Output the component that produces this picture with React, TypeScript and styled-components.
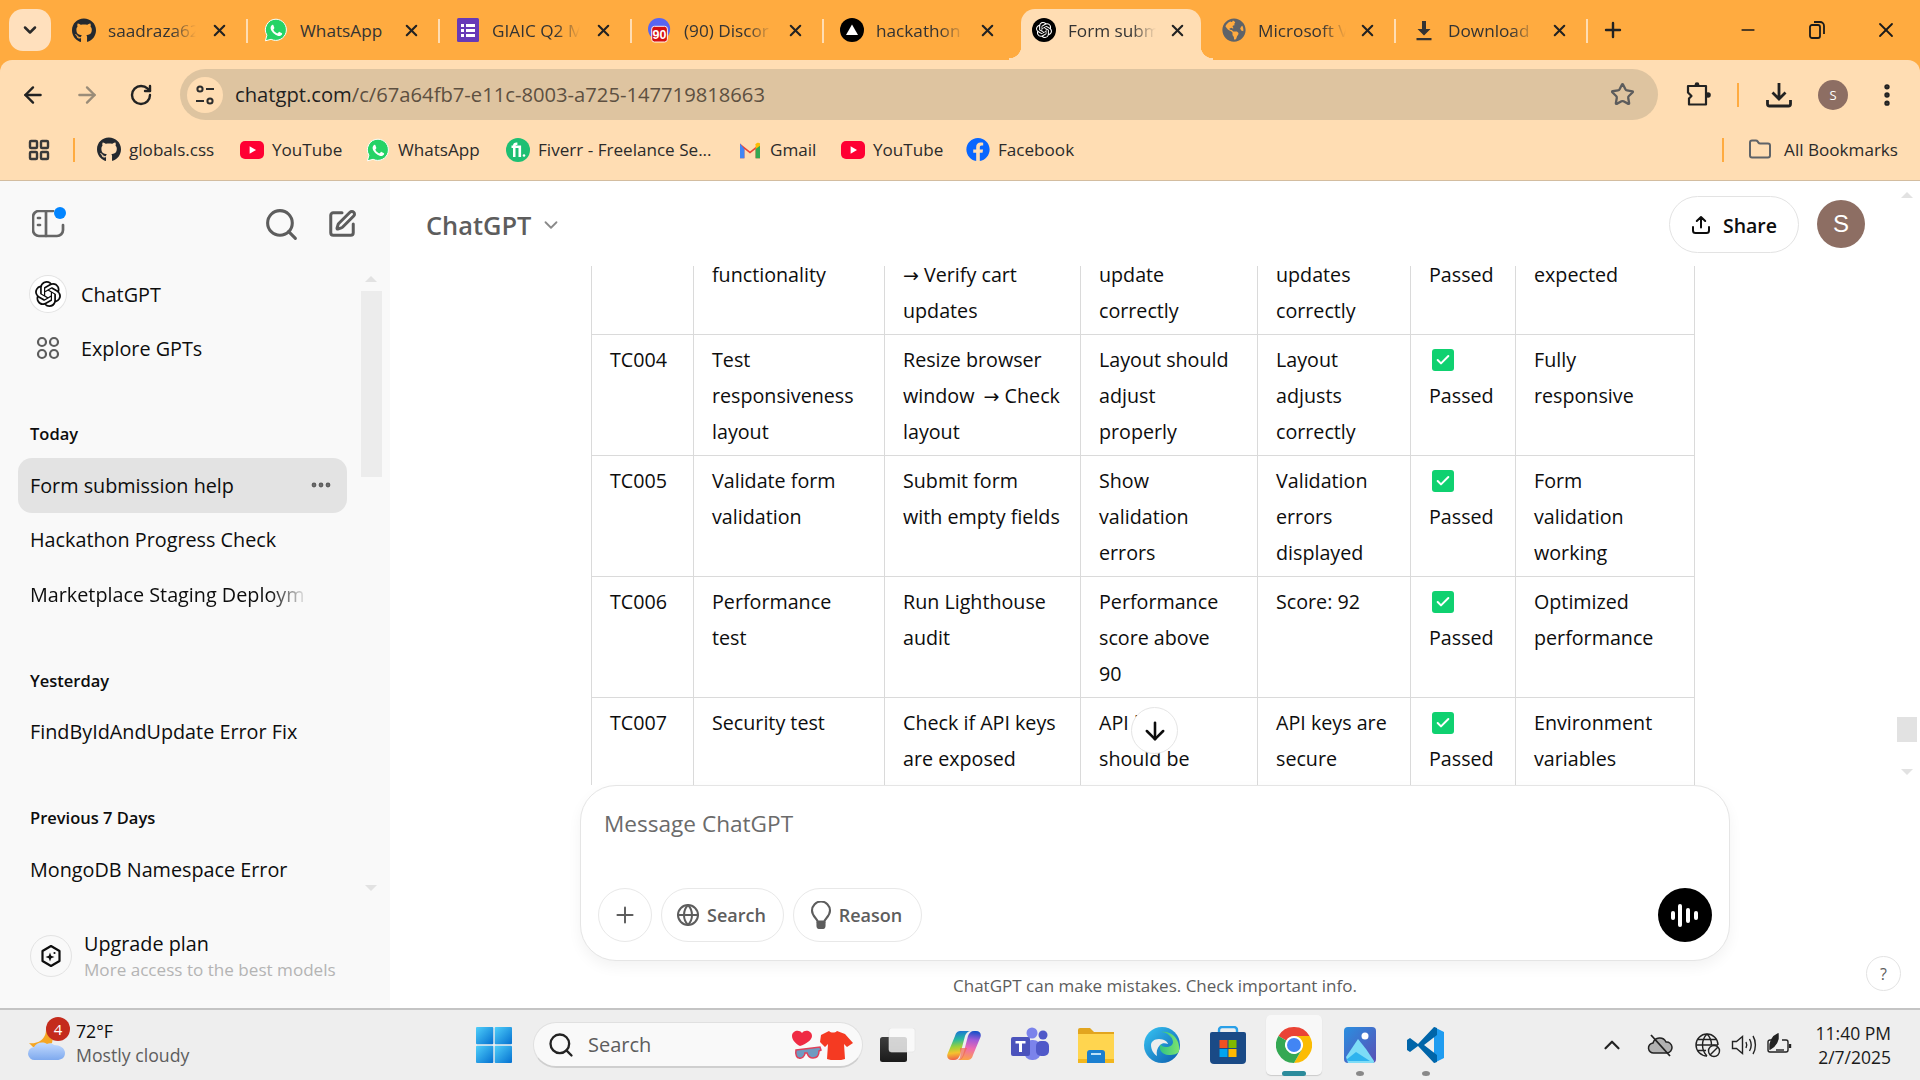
import React from 'react';
import styled, { createGlobalStyle } from 'styled-components';
import {
  ArrowLeft, ArrowRight, RotateCw, Star, EllipsisVertical, LayoutGrid, Folder, Plus, Minus, X, Search,
  SquarePen, ChevronDown, Globe, ArrowDown, Check, ChevronUp, Ellipsis,
} from 'lucide-react';
import { FaGithub, FaFacebook, FaGlobeAmericas } from 'react-icons/fa';
import { SiOpenai } from 'react-icons/si';

const FONT = `"Open Sans", "Noto Sans", sans-serif`;

const Global = createGlobalStyle`
  html, body { margin: 0; padding: 0; background: #fff; }
  * { box-sizing: border-box; }
  body { font-family: ${FONT}; overflow: hidden; color: #0d0d0d; }
`;

const Page = styled.div`
  width: 1920px; height: 1080px; display: flex; flex-direction: column; overflow: hidden;
`;

/* ---------- browser chrome ---------- */
const Chrome = styled.header`
  height: 181px; flex: none; background: #ffab40; display: flex; flex-direction: column;
`;
const TabStrip = styled.div`
  height: 60px; display: flex; padding-left: 9px;
`;
const TabMenu = styled.div`
  width: 42px; height: 42px; margin-top: 9px; margin-right: 5px; border-radius: 14px; background: #ffe0bd;
  display: flex; align-items: center; justify-content: center; color: #2a2a2a;
`;
const Tab = styled.div<{ $active?: boolean; $divider?: boolean; $w?: number }>`
  width: ${p => p.$w ?? 192}px; flex: none; height: 51px; margin-top: 9px; padding: 0 19px 9px 16px; display: flex; align-items: center;
  position: relative; border-radius: 14px 14px 0 0; color: #333;
  ${p => p.$divider && `&::after { content: ''; position: absolute; right: 0; top: 10px; height: 24px; width: 2px; background: #ffddb3; }`}
  ${p => p.$active && `
    margin-left: 5px; margin-right: 5px; padding: 0 14px 9px 11px; background: #ffddb3;
    &::before { content: ''; position: absolute; left: -12px; bottom: 0; width: 12px; height: 14px;
      background: radial-gradient(circle at 0 0, transparent 12px, #ffddb3 12.5px); }
    &::after { content: ''; position: absolute; right: -12px; bottom: 0; width: 12px; height: 14px;
      background: radial-gradient(circle at 100% 0, transparent 12px, #ffddb3 12.5px); }
  `}
`;
const TabIcon = styled.span`
  width: 24px; height: 24px; flex: none; display: flex; align-items: center; justify-content: center;
`;
const TabLabel = styled.span<{ $fade?: boolean }>`
  margin-left: 12px; width: 88px; flex: none; overflow: hidden; white-space: nowrap; font-size: 17.2px;
  ${p => p.$fade && `-webkit-mask-image: linear-gradient(90deg, #000 72%, transparent 100%); mask-image: linear-gradient(90deg, #000 72%, transparent 100%);`}
`;
const TabClose = styled.span`
  margin-left: auto; display: flex; color: #222;
`;
const NewTab = styled.div`
  margin: 9px 0 0 12px; height: 42px; width: 26px; display: flex; align-items: center; justify-content: center; color: #222;
`;
const WindowControls = styled.div`
  margin-left: auto; display: flex; height: 60px;
`;
const WindowButton = styled.div`
  width: 69px; height: 60px; display: flex; align-items: center; justify-content: center; color: #1a1a1a;
`;
const Toolbar = styled.div`
  height: 60px; background: #ffddb3; border-radius: 12px 12px 0 0; display: flex; align-items: center; padding: 9px 6px 0;
`;
const ToolButton = styled.div<{ $dim?: boolean }>`
  width: 54px; height: 46px; flex: none; display: flex; align-items: center; justify-content: center;
  color: ${p => (p.$dim ? '#9a8c78' : '#222')};
`;
const Omnibox = styled.div`
  flex: 1; height: 51px; margin: 0 14px 0 12px; background: #dec4a0; border-radius: 26px;
  display: flex; align-items: center; padding: 0 23px 0 7px;
`;
const SiteChip = styled.div`
  width: 36px; height: 36px; border-radius: 50%; background: #ffddb3; flex: none; display: flex; align-items: center; justify-content: center;
`;
const Url = styled.div`
  margin: -2px 0 0 12px; font-size: 20.2px; color: #5d5041; white-space: nowrap;
`;
const UrlHost = styled.span`
  color: #1f1f1f;
`;
const OmniStar = styled.div`
  margin-left: auto; display: flex; color: #5c5c5c;
`;
const ToolDivider = styled.div`
  width: 2px; height: 24px; background: #ffab40; margin: 0 13px 0 11px; flex: none;
`;
const ProfileChip = styled.div`
  width: 30px; height: 30px; border-radius: 50%; background: #8d6e63; color: #fff; font-size: 13px;
  display: flex; align-items: center; justify-content: center;
`;
const Bookmarks = styled.div`
  height: 61px; background: #ffddb3; border-bottom: 1px solid #d3bda0; display: flex; align-items: center; padding: 0 0 1px 27px;
`;
const AppsIcon = styled.div`
  width: 24px; height: 24px; display: flex; align-items: center; justify-content: center; color: #3a3a3a;
`;
const BarDivider = styled.div<{ $auto?: boolean }>`
  width: 2px; height: 24px; background: #ffab40; flex: none; margin-left: ${p => (p.$auto ? 'auto' : '22px')};
  margin-right: ${p => (p.$auto ? '24px' : '22px')};
`;
const Bookmark = styled.div<{ $w?: number }>`
  display: flex; align-items: center; flex: none; ${p => p.$w && `width: ${p.$w}px;`}
`;
const BookmarkIcon = styled.span`
  width: 24px; height: 24px; flex: none; display: flex; align-items: center; justify-content: center;
`;
const BookmarkLabel = styled.span`
  margin-left: 8px; font-size: 17.1px; color: #2b2b2b; white-space: nowrap;
`;
const AllBookmarks = styled(Bookmark)`
  margin-right: 22px; color: #5f6368;
`;
const AllBookmarksLabel = styled(BookmarkLabel)`
  margin-left: 12px;
`;

/* ---------- workspace ---------- */
const Workspace = styled.div`
  flex: 1; display: flex; min-height: 0;
`;
const Sidebar = styled.aside`
  width: 390px; flex: none; background: #f9f9f9; display: flex; flex-direction: column; position: relative;
`;
const SideTop = styled.div`
  height: 86px; flex: none; display: flex; align-items: center; padding: 0 33px 0 32px; color: #5d5d5d;
`;
const SideTopRight = styled.div`
  margin-left: auto; display: flex; gap: 27px; align-items: center;
`;
const ToggleWrap = styled.div`
  position: relative; width: 36px; height: 30px; display: flex; align-items: center;
`;
const BlueDot = styled.span`
  position: absolute; left: 22px; top: -2px; width: 12px; height: 12px; border-radius: 50%; background: #0285ff;
`;
const NavItem = styled.div`
  height: 54px; display: flex; align-items: center; padding-left: 30px; font-size: 19.8px; color: #0d0d0d;
`;
const NavIcon = styled.span<{ $ring?: boolean }>`
  width: 36px; height: 36px; flex: none; margin-right: 15px; border-radius: 50%; display: flex; align-items: center; justify-content: center;
  background: ${p => (p.$ring ? '#fff' : 'transparent')};
  box-shadow: ${p => (p.$ring ? '0 0 0 1px #e3e3e3' : 'none')};
`;
const GroupLabel = styled.div`
  height: 32px; line-height: 32px; margin: 43px 30px 8px; font-size: 16.5px; font-weight: 600; color: #0d0d0d;
`;
const ChatItem = styled.div<{ $active?: boolean }>`
  height: 54.5px; margin: 0 43px 0 18px; padding: 0 12px; border-radius: 14px; display: flex; align-items: center;
  background: ${p => (p.$active ? '#e3e3e3' : 'transparent')}; font-size: 19.8px; color: #0d0d0d; white-space: nowrap; overflow: hidden;
`;
const ChatTitle = styled.span<{ $fade?: boolean }>`
  flex: 1; overflow: hidden;
  ${p => p.$fade && `-webkit-mask-image: linear-gradient(90deg, #000 240px, transparent 278px); mask-image: linear-gradient(90deg, #000 240px, transparent 278px);`}
`;
const ChatDots = styled.span`
  display: flex; color: #5d5d5d; margin-right: 2px;
`;
const Upgrade = styled.div`
  margin-top: auto; height: 60px; margin-bottom: 22px; display: flex; align-items: center; padding-left: 30px;
`;
const UpgradeIcon = styled.span`
  width: 42px; height: 42px; border-radius: 50%; border: 1px solid #e3e3e3; flex: none; display: flex; align-items: center; justify-content: center;
`;
const UpgradeText = styled.div`
  margin-left: 12px; display: flex; flex-direction: column;
`;
const UpgradeTitle = styled.span`
  font-size: 19.8px; line-height: 26px; color: #0d0d0d;
`;
const UpgradeSub = styled.span`
  font-size: 17.1px; line-height: 25px; color: #b4b4b4; white-space: nowrap;
`;
const SideScrollThumb = styled.div`
  position: absolute; left: 361px; top: 110px; width: 21px; height: 186px; background: #ececec;
`;
const ArrowUpMark = styled.div<{ $left: number; $top: number }>`
  position: absolute; left: ${p => p.$left}px; top: ${p => p.$top}px; width: 0; height: 0;
  border-left: 6px solid transparent; border-right: 6px solid transparent; border-bottom: 6px solid #e2e2e2;
`;
const ArrowDownMark = styled(ArrowUpMark)`
  border-bottom: 0; border-top: 6px solid #e2e2e2;
`;

const Main = styled.main`
  flex: 1; min-width: 0; display: flex; flex-direction: column; position: relative; background: #fff;
`;
const MainHeader = styled.div`
  height: 85px; flex: none; display: flex; align-items: center; padding: 0 55px 0 36px;
`;
const ModelName = styled.div`
  display: flex; align-items: center; gap: 9px; font-size: 25.4px; font-weight: 600; color: #5d5d5d; padding-top: 3px;
`;
const ShareButton = styled.div`
  margin-left: auto; width: 130px; height: 57px; border: 1px solid #e3e3e3; border-radius: 29px; display: flex; align-items: center; justify-content: center;
  gap: 12px; font-size: 19.5px; font-weight: 600; color: #0d0d0d; margin-top: 2px; padding-top: 1px;
`;
const UserAvatar = styled.div`
  width: 48px; height: 48px; margin-left: 18px; border-radius: 50%; background: #8d6e63; color: #fff; font-size: 24px;
  display: flex; align-items: center; justify-content: center; font-family: "Liberation Sans", sans-serif;
`;
const ChatScroll = styled.div`
  flex: 1; min-height: 0; overflow: hidden; padding-left: 201px;
`;
const Table = styled.table`
  border-collapse: collapse; table-layout: fixed; width: 1103px; margin-top: -53px; font-size: 19.7px; color: #0d0d0d;
`;
const Td = styled.td`
  border: 1px solid #dadada; padding: 7px 10px 5px 18px; vertical-align: top; line-height: 36px; white-space: nowrap; height: 121px;
`;
const Line = styled.div``;
const ArrowGlyph = styled.span<{ $mid?: boolean }>`
  font-family: "DejaVu Sans", sans-serif; font-size: 19px; line-height: 0; margin-left: ${p => (p.$mid ? '4px' : '0')};
`;
const Tick = styled.span`
  width: 22px; height: 22px; margin: 7px 0 7px 3px; border-radius: 3px; background: #0fd170; color: #fff; display: flex; align-items: center; justify-content: center;
`;
const ScrollDown = styled.div`
  position: absolute; left: 741px; top: 526px; width: 47px; height: 47px; border-radius: 50%; background: #fff; border: 1px solid #e5e5e5;
  display: flex; align-items: center; justify-content: center; color: #0d0d0d;
`;
const PageThumb = styled.div`
  position: absolute; right: 3px; top: 536px; width: 20px; height: 25px; background: #e2e2e2;
`;
const ComposerZone = styled.div`
  flex: none; height: 223px; width: 1340px; padding: 0 0 0 190px; display: flex; flex-direction: column; background: transparent;
`;
const Composer = styled.div`
  width: 1150px; height: 176px; flex: none; border: 1px solid #e5e5e5; border-radius: 36px; background: #fff;
  box-shadow: 0 6px 14px rgba(0,0,0,.05); display: flex; flex-direction: column; padding: 0 17px 18px 17px;
`;
const Placeholder = styled.div`
  margin: 20px 0 0 6px; line-height: 36px; font-size: 22.6px; color: #6b6b6b;
`;
const ComposerTools = styled.div`
  margin-top: auto; display: flex; align-items: center; gap: 9px;
`;
const RoundTool = styled.div`
  width: 54px; height: 54px; border-radius: 50%; border: 1px solid #e8e8e8; display: flex; align-items: center; justify-content: center; color: #5d5d5d;
`;
const PillTool = styled.div<{ $w: number }>`
  width: ${p => p.$w}px; height: 54px; border-radius: 27px; border: 1px solid #e8e8e8; display: flex; align-items: center; justify-content: center; gap: 7px;
  font-size: 18px; font-weight: 600; color: #5d5d5d; padding-right: 3px;
`;
const VoiceButton = styled.div`
  margin-left: auto; width: 54px; height: 54px; border-radius: 50%; background: #000; display: flex; align-items: center; justify-content: center;
`;
const Disclaimer = styled.div`
  height: 47px; width: 1150px; display: flex; align-items: center; justify-content: center; font-size: 17px; color: #5d5d5d; padding-top: 2px;
`;
const HelpButton = styled.div`
  position: absolute; right: 19px; bottom: 17px; width: 35px; height: 35px; border-radius: 50%; border: 1px solid #e3e3e3; display: flex;
  align-items: center; justify-content: center; font-size: 16px; color: #5d5d5d;
`;

/* ---------- taskbar ---------- */
const Taskbar = styled.footer`
  height: 72px; flex: none; background: #eeeeee; border-top: 2px solid #c4c4c4; display: flex; align-items: center;
`;
const Weather = styled.div`
  width: 461px; flex: none; display: flex; align-items: center; padding-left: 27px;
`;
const WeatherIcon = styled.div`
  position: relative; width: 40px; height: 44px; flex: none; display: flex; align-items: flex-start;
`;
const WeatherBadge = styled.span`
  position: absolute; left: 19px; top: -6px; width: 24px; height: 24px; border-radius: 50%; background: #c42b1c; color: #fff; font-size: 15px;
  display: flex; align-items: center; justify-content: center;
`;
const WeatherText = styled.div`
  margin-left: 9px; display: flex; flex-direction: column; font-size: 17.7px; line-height: 24.5px; margin-top: -4px;
`;
const WeatherDesc = styled.span`
  color: #5d5d5d;
`;
const Slot = styled.div<{ $active?: boolean; $run?: boolean }>`
  width: 66px; height: 66px; flex: none; position: relative; display: flex; align-items: center; justify-content: center;
  ${p => p.$active && `&::before { content: ''; position: absolute; left: 5px; top: 3px; right: 5px; bottom: 3px; background: #f8f8f8; border-radius: 5px; box-shadow: 0 1px 1px rgba(0,0,0,.15); }`}
  ${p => p.$run && `&::after { content: ''; position: absolute; left: 29px; bottom: 2px; width: 8px; height: 5px; border-radius: 50%; background: #888; }`}
  ${p => p.$active && `&::after { content: ''; position: absolute; left: 21px; bottom: 2px; width: 24px; height: 5px; border-radius: 3px; background: #2c8b9b; }`}
  & > svg { position: relative; }
`;
const SearchPill = styled.div`
  width: 330px; height: 46px; flex: none; margin: 0 2px 0 6px; border-radius: 23px; background: #f9f9f9; border: 1px solid #e0e0e0; border-bottom: 2px solid #cfcfcf;
  display: flex; align-items: center; padding-left: 13px; font-size: 20px; color: #5d5d5d;
`;
const SearchText = styled.span`
  margin-left: 13px;
`;
const SearchArt = styled.span`
  margin-left: auto; margin-right: 9px; display: flex;
`;
const Tray = styled.div`
  margin-left: auto; display: flex; align-items: center; padding-right: 29px; color: #222;
`;
const TraySlot = styled.div<{ $w: number; $gap?: number }>`
  width: ${p => p.$w}px; margin-left: ${p => p.$gap ?? 0}px; display: flex; align-items: center; justify-content: center;
`;
const Clock = styled.div`
  width: 93px; text-align: right; font-size: 17.5px; line-height: 24px; color: #1a1a1a; white-space: nowrap;
`;

/* ---------- drawings ---------- */
const OpenAiBadge = () => (
  <svg width="24" height="24" viewBox="0 0 24 24">
    <circle cx="12" cy="12" r="12" fill="#000" />
    <g transform="translate(4 4) scale(.667)"><SiOpenai color="#fff" size={24} /></g>
  </svg>
);
const WhatsAppIcon = ({ s = 24 }: { s?: number }) => (
  <svg width={s} height={s} viewBox="0 0 24 24">
    <path d="M12 1.2a10.6 10.6 0 0 0-9.1 16L1.4 22.8l5.7-1.5A10.6 10.6 0 1 0 12 1.2z" fill="#25d366" stroke="#fff" strokeWidth="1" />
    <path d="M8.6 6.8c-.3 0-.8.2-1.1.6-.4.5-.9 1.2-.9 2.5s1 2.9 1.1 3.1c.2.2 2 3.1 4.9 4.2 2.4 1 2.9.8 3.4.7.5-.1 1.7-.7 1.9-1.3.2-.6.2-1.2.2-1.3-.1-.2-.3-.2-.6-.4l-2-1c-.3-.1-.5-.1-.7.2l-.9 1.1c-.2.2-.3.2-.6.1-.3-.2-1.2-.5-2.3-1.4-.8-.8-1.4-1.7-1.6-2-.1-.3 0-.5.2-.6l.7-1c.1-.2.1-.3 0-.5L9.4 7.3c-.2-.5-.5-.5-.8-.5z" fill="#fff" />
  </svg>
);
const YouTubeIcon = () => (
  <svg width="24" height="24" viewBox="0 0 24 24">
    <rect x="0" y="3" width="24" height="18" rx="5" fill="#ff0033" />
    <path d="M9.6 8.2l6.4 3.8-6.4 3.8z" fill="#fff" />
  </svg>
);
const FormsIcon = () => (
  <svg width="24" height="24" viewBox="0 0 24 24">
    <rect x="1" y="0" width="22" height="24" rx="1.5" fill="#673ab7" />
    <g fill="#fff"><rect x="5" y="6" width="3" height="3" /><rect x="10" y="6" width="9" height="3" /><rect x="5" y="11" width="3" height="3" /><rect x="10" y="11" width="9" height="3" /><rect x="5" y="16" width="3" height="3" /><rect x="10" y="16" width="9" height="3" /></g>
  </svg>
);
const NinetyIcon = () => (
  <svg width="26" height="26" viewBox="0 0 26 26">
    <circle cx="12" cy="12" r="12" fill="#5865f2" />
    <rect x="4" y="9" width="17" height="17" rx="3" fill="#d50f0f" stroke="#fff" strokeWidth="1" />
    <text x="12.5" y="23" textAnchor="middle" fontSize="13.5" fontWeight="700" fill="#fff" fontFamily="Liberation Sans, sans-serif">90</text>
  </svg>
);
const VercelIcon = () => (
  <svg width="24" height="24" viewBox="0 0 24 24">
    <circle cx="12" cy="12" r="12" fill="#000" />
    <path d="M12 6.5l6 10.5H6z" fill="#fff" />
  </svg>
);
const DownloadMark = ({ s = 24, c = '#333' }: { s?: number; c?: string }) => (
  <svg width={s} height={s} viewBox="0 0 24 24" fill={c}>
    <path d="M10 3h4v8h4.5L12 17.5 5.5 11H10zM4.5 20h15v2.2h-15z" />
  </svg>
);
const DownloadTray = () => (
  <svg width="26" height="26" viewBox="0 0 26 26" fill="none" stroke="#222" strokeWidth="2.8">
    <path d="M13 1v15M6.500 10.500L13 17l6.500-6.500" />
    <path d="M1.500 18v4a2 2 0 0 0 2 2h19a2 2 0 0 0 2-2v-4" />
  </svg>
);
const ExtensionIcon = () => (
  <svg width="26" height="26" viewBox="0 0 26 26" fill="none" stroke="#222" strokeWidth="2.2" strokeLinejoin="round">
    <path d="M2 4h18v18.500H3v-6l2.500-2.500L2 10.500z" />
    <circle cx="11" cy="2.500" r="2.300" fill="#222" stroke="none" />
    <circle cx="22" cy="13" r="2.800" fill="#222" stroke="none" />
  </svg>
);
const SiteIcon = () => (
  <svg width="22" height="24" viewBox="0 0 22 24" fill="none" stroke="#2d2d2d" strokeWidth="2">
    <circle cx="6" cy="6" r="2.6" /><path d="M12 6h8" />
    <circle cx="16" cy="18" r="2.6" /><path d="M2 18h8" />
  </svg>
);
const GoogleM = () => (
  <svg width="24" height="24" viewBox="0 0 24 24">
    <path d="M2 5.500l10 8 10-8v14.800h-4.400V11L12 15.400 6.400 11v9.300H2z" fill="#ea4335" />
    <path d="M2 5.500V20.300h4.400V11z" fill="#4285f4" />
    <path d="M17.600 11v9.300H22V5.500z" fill="#34a853" />
    <path d="M22 5.500v2.200l-4.400 3.300V6.200c1-1.800 3.300-2 4.400-.7z" fill="#fbbc04" />
  </svg>
);
const FiverrIcon = () => (
  <svg width="24" height="24" viewBox="0 0 24 24">
    <circle cx="12" cy="12" r="12" fill="#1dbf73" />
    <path d="M7 19V10H5.500V7.500H7C7 5.500 8.400 4.500 10.400 4.500h1V7h-.8c-.8 0-1.100.2-1.100.9v-.4h5.600V19h-2.600v-9H9.500v9z" fill="#fff" />
    <circle cx="18" cy="17.500" r="1.300" fill="#fff" />
  </svg>
);
const ToggleIcon = () => (
  <svg width="33" height="28" viewBox="0 0 33 28" fill="none" stroke="#666" strokeWidth="2.700" strokeLinecap="round">
    <path d="M31 15v5a6 6 0 0 1-6 6H7a6 6 0 0 1-6-6V7a6 6 0 0 1 6-6h14" />
    <path d="M14 1v25" />
    <path d="M6 8h2M6 15h2" />
  </svg>
);
const ExploreIcon = () => (
  <svg width="24" height="24" viewBox="0 0 24 24" fill="none" stroke="#5d5d5d" strokeWidth="2.2">
    <circle cx="6" cy="6" r="4" /><circle cx="18" cy="6" r="4" /><circle cx="6" cy="18" r="4" /><circle cx="18" cy="18" r="4" />
  </svg>
);
const UpgradeGlyph = () => (
  <svg width="22" height="24" viewBox="0 0 22 24">
    <path d="M11 2l8.500 5v10L11 22l-8.500-5V7z" fill="none" stroke="#0d0d0d" strokeWidth="2.200" strokeLinejoin="round" />
    <path d="M10 8.500l1.200 3.300 3.300 1.200-3.300 1.200L10 17.500l-1.200-3.300L5.500 13l3.300-1.200z" fill="#0d0d0d" />
    <circle cx="14.500" cy="9" r="1.100" fill="#0d0d0d" />
  </svg>
);
const ShareIcon = () => (
  <svg width="20" height="20" viewBox="0 0 20 20" fill="none" stroke="#0d0d0d" strokeWidth="2" strokeLinecap="round" strokeLinejoin="round">
    <path d="M10 12.500V2M5.800 6L10 2l4.200 4M2 12v3.500A2.500 2.500 0 0 0 4.500 18h11a2.500 2.500 0 0 0 2.500-2.500V12" />
  </svg>
);
const BulbIcon = () => (
  <svg width="22" height="28" viewBox="0 0 22 28" fill="none" stroke="#5d5d5d" strokeWidth="2.100">
    <path d="M7.500 20.500c0-3-5.500-5-5.500-11a9 9 0 0 1 18 0c0 6-5.500 8-5.500 11z" />
    <path d="M7.500 21v3.500c0 1.500 1 2.500 2 2.500h3c1 0 2-1 2-2.500V21" fill="#5d5d5d" />
  </svg>
);
const VoiceBars = () => (
  <svg width="30" height="24" viewBox="0 0 30 24" fill="#fff">
    <rect x="1" y="8" width="4" height="9" rx="2" /><rect x="8" y="1" width="4" height="23" rx="2" />
    <rect x="16" y="5" width="4" height="15" rx="2" /><rect x="24" y="8" width="4" height="9" rx="2" />
  </svg>
);
const WeatherArt = () => (
  <svg width="38" height="40" viewBox="0 0 38 40">
    <defs><linearGradient id="wc" x1="0" y1="0" x2="0" y2="1"><stop offset="0" stopColor="#c4dcff" /><stop offset="1" stopColor="#7ea9ee" /></linearGradient></defs>
    <path d="M2 20c6 1 12-1 15-6 2-3 2-6 2-9 5 3 8 9 6 15l-6 4H6z" fill="#f5a623" />
    <path d="M8 37a6.500 6.500 0 0 1-1-13c2-4 8-6 13-3 2-1 5-1 7 1 6 0 11 3 11 8s-4 7-8 7z" fill="url(#wc)" />
  </svg>
);
const WinLogo = () => (
  <svg width="36" height="36" viewBox="0 0 36 36">
    <defs><linearGradient id="win" x1="0" y1="0" x2="1" y2="1"><stop offset="0" stopColor="#4fcffa" /><stop offset="1" stopColor="#0470d0" /></linearGradient></defs>
    <g fill="url(#win)"><rect x="0" y="0" width="17.300" height="17.300" rx="1" /><rect x="18.700" y="0" width="17.300" height="17.300" rx="1" /><rect x="0" y="18.700" width="17.300" height="17.300" rx="1" /><rect x="18.700" y="18.700" width="17.300" height="17.300" rx="1" /></g>
  </svg>
);
const TaskView = () => (
  <svg width="36" height="34" viewBox="0 0 36 34">
    <defs><linearGradient id="tv" x1="0" y1="0" x2="0" y2="1"><stop offset="0" stopColor="#3e3e3e" /><stop offset="1" stopColor="#1a1a1a" /></linearGradient></defs>
    <rect x="0" y="9" width="27" height="25" rx="2.500" fill="url(#tv)" />
    <rect x="9" y="0" width="26" height="24" rx="2.500" fill="#fbfbfb" fillOpacity=".8" stroke="#e2e2e2" strokeWidth=".6" />
  </svg>
);
const Copilot = () => (
  <svg width="34" height="31" viewBox="0 0 34 31">
    <defs>
      <linearGradient id="c1" x1=".3" y1="0" x2=".4" y2="1"><stop offset="0" stopColor="#1a6fd8" /><stop offset=".3" stopColor="#28b8a0" /><stop offset=".55" stopColor="#9ed13a" /><stop offset=".75" stopColor="#f5c22e" /><stop offset="1" stopColor="#ef5a4a" /></linearGradient>
      <linearGradient id="c2" x1=".6" y1="0" x2=".5" y2="1"><stop offset="0" stopColor="#1450c8" /><stop offset=".3" stopColor="#a35ad8" /><stop offset=".6" stopColor="#ee6ab0" /><stop offset="1" stopColor="#fba24a" /></linearGradient>
    </defs>
    <path d="M8 6C9 2 11 1 14 1h10c-3 0-5 2-6 5l-5 19c-1 3-3 5-6 5H5c-4 0-5.500-3-4.500-6z" fill="url(#c1)" />
    <path d="M26 25c-1 4-3 5-6 5H10c3 0 5-2 6-5l5-19c1-3 3-5 6-5h2c4 0 5.500 3 4.500 6z" fill="url(#c2)" />
    <path d="M13 18h7l-3 7c-1 3-3 5-6 5h-1c3 0 4-3 3-12z" fill="#ef6a50" fillOpacity=".7" />
  </svg>
);
const Teams = () => (
  <svg width="38" height="36" viewBox="0 0 38 36">
    <circle cx="21" cy="6" r="5.500" fill="#7b83eb" /><circle cx="32" cy="8" r="4.500" fill="#5059c9" />
    <rect x="13" y="13" width="17" height="20" rx="8" fill="#7b83eb" />
    <rect x="25" y="14" width="13" height="15" rx="5" fill="#5059c9" />
    <rect x="0" y="10" width="19" height="19" rx="2" fill="#4b53bc" />
    <path d="M4.500 14h10v2.500H11V25H8v-8.500H4.500z" fill="#fff" />
  </svg>
);
const Explorer = () => (
  <svg width="36" height="36" viewBox="0 0 36 36">
    <path d="M0 3a2 2 0 0 1 2-2h10l4 4h20v8H0z" fill="#e2a51f" />
    <path d="M0 7h36v27a2 2 0 0 1-2 2H2a2 2 0 0 1-2-2z" fill="#ffd54f" />
    <rect x="0" y="32" width="36" height="4" fill="#f2b71e" />
    <path d="M9 26a3 3 0 0 1 3-3h12a3 3 0 0 1 3 3v10H9z" fill="#1b7fd0" />
    <rect x="13" y="26" width="10" height="2" fill="#bde0f7" />
  </svg>
);
const Edge = () => (
  <svg width="36" height="38" viewBox="0 0 36 38">
    <defs>
      <linearGradient id="e1" x1="0" y1="0" x2="1" y2="1"><stop offset="0" stopColor="#37c6f4" /><stop offset="1" stopColor="#0b5cad" /></linearGradient>
      <linearGradient id="e2" x1="0" y1="0" x2="1" y2="0"><stop offset="0" stopColor="#33c481" /><stop offset="1" stopColor="#7be36f" /></linearGradient>
    </defs>
    <circle cx="18" cy="19" r="18" fill="url(#e1)" />
    <path d="M35 25c.8-6-1-11-5-15-3-3-8-5-13-4 6 0 12 5 12 10 0 3-3 5-7 5-3 0-5-1-5-3-3 4 0 11 8 11 5 0 9-1 10-4z" fill="url(#e2)" />
    <path d="M16 19c-3 3-4 7-3 11-3-2-6-6-6-11 0-3 3-6 8-6 5 0 9 3 9 5-3-1-6-1-8 1z" fill="#eeeeee" />
  </svg>
);
const Store = () => (
  <svg width="36" height="38" viewBox="0 0 36 38">
    <path d="M9 7V4a3 3 0 0 1 3-3h12a3 3 0 0 1 3 3v3" fill="none" stroke="#2aa0e8" strokeWidth="2.400" />
    <path d="M0 8a2 2 0 0 1 2-2h32a2 2 0 0 1 2 2v26a4 4 0 0 1-4 4H4a4 4 0 0 1-4-4z" fill="#1a4a86" />
    <rect x="9.500" y="14" width="8" height="8" fill="#f25022" /><rect x="18.500" y="14" width="8" height="8" fill="#7fba00" />
    <rect x="9.500" y="23" width="8" height="8" fill="#00a4ef" /><rect x="18.500" y="23" width="8" height="8" fill="#ffb900" />
  </svg>
);
const ChromeLogo = () => (
  <svg width="36" height="36" viewBox="0 0 36 36">
    <circle cx="18" cy="18" r="18" fill="#fff" />
    <path d="M2.410 9A18 18 0 0 1 33.590 9H18A9 9 0 0 0 10.200 13.500z" fill="#ea4335" />
    <path d="M33.590 9A18 18 0 0 1 18 36L25.800 22.500A9 9 0 0 0 18 9z" fill="#fbbc04" />
    <path d="M18 36A18 18 0 0 1 2.410 9L10.200 13.500A9 9 0 0 0 25.800 22.500z" fill="#34a853" />
    <circle cx="18" cy="18" r="7" fill="#4285f4" />
  </svg>
);
const Photos = () => (
  <svg width="34" height="36" viewBox="0 0 34 36">
    <defs><linearGradient id="ph" x1="0" y1="0" x2="1" y2="1"><stop offset="0" stopColor="#2a8fe0" /><stop offset="1" stopColor="#5a4fb5" /></linearGradient></defs>
    <rect x="1" y="0" width="32" height="36" rx="4" fill="url(#ph)" />
    <circle cx="22" cy="9" r="3.500" fill="#fff" />
    <path d="M3 30l12-18 8 10 8 12v1a1 1 0 0 1-1 1H5z" fill="#7ddcf7" />
    <path d="M3 33l10-8 14 9H6z" fill="#2fb3ee" />
  </svg>
);
const VsCode = () => (
  <svg width="38" height="38" viewBox="0 0 38 38">
    <path d="M27 1l10 5v26l-10 5z" fill="#1f9cf0" />
    <path d="M27 1L11 18 3 12 0 14v10l3 2 8-6 16 17 3-1V29L17 19 30 9V2z" fill="#0065a9" />
  </svg>
);
const CloudOffIcon = () => (
  <svg width="26" height="24" viewBox="0 0 26 24" fill="none" stroke="#222" strokeWidth="1.500">
    <path d="M7 20a5 5 0 0 1-1-10 7 7 0 0 1 13-1 5.500 5.500 0 0 1 1 11z" fill="#8a8a8a" fillOpacity=".6" />
    <path d="M4 2l19 21" stroke="#222" strokeWidth="1.800" />
  </svg>
);
const GlobeBan = () => (
  <svg width="26" height="26" viewBox="0 0 26 26" fill="none" stroke="#222" strokeWidth="1.400">
    <path d="M12 24a11 11 0 1 1 11-11" /><path d="M1 13h22M3 7.500h18M3 18.500h8M12 2c-3 3-4.500 7-4.500 11s1.500 8 4.500 11M12 2c3 3 4.500 7 4.500 11" />
    <circle cx="19" cy="19" r="5.500" fill="#eee" /><path d="M15 23l8-8" />
  </svg>
);
const Speaker = () => (
  <svg width="26" height="24" viewBox="0 0 26 24" fill="none" stroke="#222" strokeWidth="1.400">
    <path d="M1.500 8.500h4l6-5v17l-6-5h-4z" />
    <path d="M15 9c1 2 1 4 0 6M18.500 6c2 3.500 2 8.500 0 12M22 3c3.200 5 3.200 13 0 18" />
  </svg>
);
const BatteryLeaf = () => (
  <svg width="26" height="24" viewBox="0 0 26 24" fill="none" stroke="#222" strokeWidth="1.400">
    <path d="M8 7H3a2 2 0 0 0-2 2v8a2 2 0 0 0 2 2h16a2 2 0 0 0 2-2V9a2 2 0 0 0-2-2h-4" />
    <path d="M23 11v4" strokeWidth="2.400" />
    <path d="M3 16C2 9 6 3 11 1c1 6-2 12-8 15z" fill="#222" />
    <path d="M9 17h8" />
  </svg>
);
const SearchDecor = () => (
  <svg width="62" height="30" viewBox="0 0 62 30">
    <path d="M1 6c0-5 7-7 10-3 3-4 10-2 10 3 0 4-6 8-12 10C5 14 1 10 1 6z" fill="#ef2b44" />
    <path d="M5 20l24-3 1 3-2 1c0 5-2 7-6 7-3 0-5-2-6-5h-2c0 3-3 6-6 5-2 0-4-3-3-8z" fill="#6f9ac0" stroke="#e0405a" strokeWidth="1.500" />
    <path d="M30 5l8-4c2 2 6 2 8 0l8 3 8 9-6 4-3-3 1 15c-6 2-12 2-18 0l1-15-3 3-5-5z" fill="#f53a22" />
  </svg>
);

const ColumnWidths = [102, 191, 196, 177, 153, 105, 179];

const rows: (string[] | null)[][] = [
  [['TC003'], ['Test cart', 'functionality'], ['Add item to cart', '→ Verify cart', 'updates'], ['Cart should', 'update', 'correctly'], ['Cart', 'updates', 'correctly'], null, ['Works as', 'expected']],
  [['TC004'], ['Test', 'responsiveness', 'layout'], ['Resize browser', 'window → Check', 'layout'], ['Layout should', 'adjust', 'properly'], ['Layout', 'adjusts', 'correctly'], null, ['Fully', 'responsive']],
  [['TC005'], ['Validate form', 'validation'], ['Submit form', 'with empty fields'], ['Show', 'validation', 'errors'], ['Validation', 'errors', 'displayed'], null, ['Form', 'validation', 'working']],
  [['TC006'], ['Performance', 'test'], ['Run Lighthouse', 'audit'], ['Performance', 'score above', '90'], ['Score: 92'], null, ['Optimized', 'performance']],
  [['TC007'], ['Security test'], ['Check if API keys', 'are exposed'], ['API keys', 'should be'], ['API keys are', 'secure'], null, ['Environment', 'variables']],
];

const renderLine = (l: string) => {
  const parts = l.split('→');
  if (parts.length === 1) return l;
  return <>{parts[0]}<ArrowGlyph $mid={parts[0] !== ''}>→</ArrowGlyph>{parts[1]}</>;
};

const tabs = [
  { icon: <FaGithub size={25} color="#24292f" />, label: 'saadraza62', fade: true, divider: true },
  { icon: <WhatsAppIcon />, label: 'WhatsApp', divider: true },
  { icon: <FormsIcon />, label: 'GIAIC Q2 M', fade: true, divider: true },
  { icon: <NinetyIcon />, label: '(90) Discor', fade: true, divider: true },
  { icon: <VercelIcon />, label: 'hackathon', fade: true },
  { icon: <OpenAiBadge />, label: 'Form subm', fade: true, active: true, w: 180 },
  { icon: <FaGlobeAmericas size={24} color="#5f6368" />, label: 'Microsoft V', fade: true, divider: true, w: 190 },
  { icon: <DownloadMark />, label: 'Download', fade: true, divider: true },
];

const bookmarks = [
  { icon: <FaGithub size={25} color="#24292f" />, label: 'globals.css', w: 143 },
  { icon: <YouTubeIcon />, label: 'YouTube', w: 126 },
  { icon: <WhatsAppIcon />, label: 'WhatsApp', w: 140 },
  { icon: <FiverrIcon />, label: 'Fiverr - Freelance Se...', w: 232 },
  { icon: <GoogleM />, label: 'Gmail', w: 103 },
  { icon: <YouTubeIcon />, label: 'YouTube', w: 125 },
  { icon: <FaFacebook size={25} color="#0866ff" />, label: 'Facebook' },
];

export default function App() {
  return (
    <Page>
      <Global />
      <Chrome>
        <TabStrip>
          <TabMenu><ChevronDown size={20} strokeWidth={3} /></TabMenu>
          {tabs.map(t => (
            <Tab key={t.label} $active={t.active} $divider={t.divider} $w={t.w}>
              <TabIcon>{t.icon}</TabIcon>
              <TabLabel $fade={t.fade}>{t.label}</TabLabel>
              <TabClose><X size={19} strokeWidth={2.6} /></TabClose>
            </Tab>
          ))}
          <NewTab><Plus size={24} strokeWidth={2.4} /></NewTab>
          <WindowControls>
            <WindowButton><Minus size={20} strokeWidth={2} /></WindowButton>
            <WindowButton>
              <svg width="18" height="20" viewBox="0 0 18 20" fill="none" stroke="#1a1a1a" strokeWidth="1.800"><rect x="2" y="5" width="10" height="13" rx="2" /><path d="M6 2h6a4 4 0 0 1 4 4v8" /></svg>
            </WindowButton>
            <WindowButton><X size={24} strokeWidth={1.8} /></WindowButton>
          </WindowControls>
        </TabStrip>
        <Toolbar>
          <ToolButton><ArrowLeft size={26} strokeWidth={2.2} /></ToolButton>
          <ToolButton $dim><ArrowRight size={26} strokeWidth={2.2} /></ToolButton>
          <ToolButton><RotateCw size={24} strokeWidth={2.4} /></ToolButton>
          <Omnibox>
            <SiteChip><SiteIcon /></SiteChip>
            <Url><UrlHost>chatgpt.com</UrlHost>/c/67a64fb7-e11c-8003-a725-147719818663</Url>
            <OmniStar><Star size={25} strokeWidth={2.2} /></OmniStar>
          </Omnibox>
          <ToolButton><ExtensionIcon /></ToolButton>
          <ToolDivider />
          <ToolButton><DownloadTray /></ToolButton>
          <ToolButton><ProfileChip>S</ProfileChip></ToolButton>
          <ToolButton><EllipsisVertical size={28} strokeWidth={2.6} /></ToolButton>
        </Toolbar>
        <Bookmarks>
          <AppsIcon><LayoutGrid size={26} strokeWidth={2.4} /></AppsIcon>
          <BarDivider />
          {bookmarks.map((b, i) => (
            <Bookmark key={i} $w={b.w}>
              <BookmarkIcon>{b.icon}</BookmarkIcon>
              <BookmarkLabel>{b.label}</BookmarkLabel>
            </Bookmark>
          ))}
          <BarDivider $auto />
          <AllBookmarks>
            <BookmarkIcon><Folder size={25} strokeWidth={2} /></BookmarkIcon>
            <AllBookmarksLabel>All Bookmarks</AllBookmarksLabel>
          </AllBookmarks>
        </Bookmarks>
      </Chrome>

      <Workspace>
        <Sidebar>
          <SideTop>
            <ToggleWrap><ToggleIcon /><BlueDot /></ToggleWrap>
            <SideTopRight>
              <Search size={37} strokeWidth={2} />
              <SquarePen size={30} strokeWidth={2.4} />
            </SideTopRight>
          </SideTop>
          <NavItem><NavIcon $ring><SiOpenai size={26} color="#0d0d0d" /></NavIcon>ChatGPT</NavItem>
          <NavItem><NavIcon><ExploreIcon /></NavIcon>Explore GPTs</NavItem>
          <GroupLabel>Today</GroupLabel>
          <ChatItem $active><ChatTitle>Form submission help</ChatTitle><ChatDots><Ellipsis size={24} strokeWidth={2.8} /></ChatDots></ChatItem>
          <ChatItem><ChatTitle>Hackathon Progress Check</ChatTitle></ChatItem>
          <ChatItem><ChatTitle $fade>Marketplace Staging Deploym</ChatTitle></ChatItem>
          <GroupLabel>Yesterday</GroupLabel>
          <ChatItem><ChatTitle>FindByIdAndUpdate Error Fix</ChatTitle></ChatItem>
          <GroupLabel>Previous 7 Days</GroupLabel>
          <ChatItem><ChatTitle>MongoDB Namespace Error</ChatTitle></ChatItem>
          <Upgrade>
            <UpgradeIcon><UpgradeGlyph /></UpgradeIcon>
            <UpgradeText>
              <UpgradeTitle>Upgrade plan</UpgradeTitle>
              <UpgradeSub>More access to the best models</UpgradeSub>
            </UpgradeText>
          </Upgrade>
          <ArrowUpMark $left={365} $top={95} />
          <SideScrollThumb />
          <ArrowDownMark $left={365} $top={704} />
        </Sidebar>

        <Main>
          <MainHeader>
            <ModelName>ChatGPT<ChevronDown size={22} strokeWidth={2} color="#8a8a8a" /></ModelName>
            <ShareButton><ShareIcon />Share</ShareButton>
            <UserAvatar>S</UserAvatar>
          </MainHeader>
          <ChatScroll>
            <Table>
              <colgroup>{ColumnWidths.map((w, i) => <col key={i} style={{ width: w }} />)}</colgroup>
              <tbody>
                {rows.map((r, i) => (
                  <tr key={i}>
                    {r.map((cell, j) => (
                      <Td key={j}>
                        {cell
                          ? cell.map(l => <Line key={l}>{renderLine(l)}</Line>)
                          : <><Tick><Check size={16} strokeWidth={3} /></Tick><Line>Passed</Line></>}
                      </Td>
                    ))}
                  </tr>
                ))}
              </tbody>
            </Table>
          </ChatScroll>
          <ComposerZone>
            <Composer>
              <Placeholder>Message ChatGPT</Placeholder>
              <ComposerTools>
                <RoundTool><Plus size={26} strokeWidth={1.8} /></RoundTool>
                <PillTool $w={123}><Globe size={24} strokeWidth={2} />Search</PillTool>
                <PillTool $w={129}><BulbIcon />Reason</PillTool>
                <VoiceButton><VoiceBars /></VoiceButton>
              </ComposerTools>
            </Composer>
            <Disclaimer>ChatGPT can make mistakes. Check important info.</Disclaimer>
          </ComposerZone>
          <ScrollDown><ArrowDown size={28} strokeWidth={2.2} /></ScrollDown>
          <ArrowUpMark $left={1511} $top={11} />
          <PageThumb />
          <ArrowDownMark $left={1511} $top={588} />
          <HelpButton>?</HelpButton>
        </Main>
      </Workspace>

      <Taskbar>
        <Weather>
          <WeatherIcon><WeatherArt /><WeatherBadge>4</WeatherBadge></WeatherIcon>
          <WeatherText>
            <span>72°F</span>
            <WeatherDesc>Mostly cloudy</WeatherDesc>
          </WeatherText>
        </Weather>
        <Slot><WinLogo /></Slot>
        <SearchPill>
          <Search size={28} strokeWidth={2} color="#222" />
          <SearchText>Search</SearchText>
          <SearchArt><SearchDecor /></SearchArt>
        </SearchPill>
        <Slot><TaskView /></Slot>
        <Slot><Copilot /></Slot>
        <Slot><Teams /></Slot>
        <Slot><Explorer /></Slot>
        <Slot><Edge /></Slot>
        <Slot><Store /></Slot>
        <Slot $active><ChromeLogo /></Slot>
        <Slot $run><Photos /></Slot>
        <Slot $run><VsCode /></Slot>
        <Tray>
          <TraySlot $w={48}><ChevronUp size={26} strokeWidth={2} /></TraySlot>
          <TraySlot $w={48}><CloudOffIcon /></TraySlot>
          <TraySlot $w={36} $gap={6}><GlobeBan /></TraySlot>
          <TraySlot $w={36}><Speaker /></TraySlot>
          <TraySlot $w={36}><BatteryLeaf /></TraySlot>
          <Clock>11:40 PM<br />2/7/2025</Clock>
        </Tray>
      </Taskbar>
    </Page>
  );
}
